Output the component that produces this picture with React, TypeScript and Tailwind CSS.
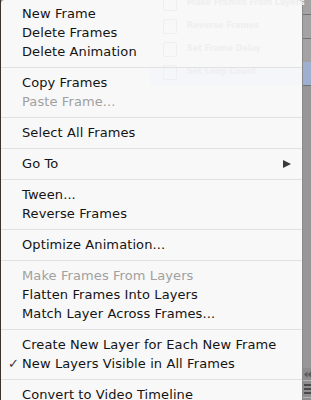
import React from 'react';

type Item =
  | { kind: 'item'; label: string; disabled?: boolean; checked?: boolean; submenu?: boolean }
  | { kind: 'sep' };

const items: Item[] = [
  { kind: 'item', label: 'New Frame' },
  { kind: 'item', label: 'Delete Frames' },
  { kind: 'item', label: 'Delete Animation' },
  { kind: 'sep' },
  { kind: 'item', label: 'Copy Frames' },
  { kind: 'item', label: 'Paste Frame...', disabled: true },
  { kind: 'sep' },
  { kind: 'item', label: 'Select All Frames' },
  { kind: 'sep' },
  { kind: 'item', label: 'Go To', submenu: true },
  { kind: 'sep' },
  { kind: 'item', label: 'Tween...' },
  { kind: 'item', label: 'Reverse Frames' },
  { kind: 'sep' },
  { kind: 'item', label: 'Optimize Animation...' },
  { kind: 'sep' },
  { kind: 'item', label: 'Make Frames From Layers', disabled: true },
  { kind: 'item', label: 'Flatten Frames Into Layers' },
  { kind: 'item', label: 'Match Layer Across Frames...' },
  { kind: 'sep' },
  { kind: 'item', label: 'Create New Layer for Each New Frame' },
  { kind: 'item', label: 'New Layers Visible in All Frames', checked: true },
  { kind: 'sep' },
  { kind: 'item', label: 'Convert to Video Timeline' },
];

// faint panel rows that show through the translucent menu
const ghostRows = ['Make Frames From Layers', 'Reverse Frames', 'Set Frame Delay', 'Set Loop Count'];

function GhostPanel() {
  return (
    <div className="absolute left-[149px] top-0 w-[152px] h-[90px] pointer-events-none">
      <div className="absolute left-0 right-0 top-[68px] h-[17px] bg-[#f4f6fa]" />
      <div className="absolute left-[13px] top-[-5px] flex flex-col gap-[7px]">
        {ghostRows.map((r) => (
          <div key={r} className="flex items-center gap-[10px] h-[16px]">
            <div className="w-[14px] h-[15px] rounded-[2px] border border-[#efefef]" />
            <span className="text-[8px] font-bold text-[#efefef] whitespace-nowrap">{r}</span>
          </div>
        ))}
      </div>
    </div>
  );
}

function SidePanel() {
  return (
    <div className="w-[9px] h-full flex flex-col bg-[#9c9c9c] border-l border-[#8a8a8a]">
      <div className="h-[14px] bg-[#a3a3a3]" />
      <div className="h-px bg-[#727272]" />
      <div className="h-[23px] bg-[#a3a3a3]" />
      <div className="h-px bg-[#727272]" />
      <div className="h-[23px] bg-[#a3a3a3]" />
      <div className="h-[23px] bg-[#9eafd0]" />
      <div className="h-px bg-[#727272]" />
      <div className="h-[282px] bg-[#979797]" />
      <div className="h-[12px] bg-[#8c8c8c] flex items-center pl-[1px]">
        <svg width="8" height="7" viewBox="0 0 8 7">
          <polygon points="4,0 0,3.5 4,7" fill="#5a5a5a" />
          <polygon points="8,0 4,3.5 8,7" fill="#5a5a5a" />
        </svg>
      </div>
      <div className="h-px bg-[#b5b5b5]" />
      <div className="h-[16px] bg-[#8e8e8e] flex flex-col justify-center gap-[2px] pl-[1px]">
        <div className="h-[2px] bg-[#4a4a4a]" />
        <div className="h-[2px] bg-[#4a4a4a]" />
        <div className="h-[2px] bg-[#4a4a4a]" />
      </div>
      <div className="h-px bg-[#b5b5b5]" />
      <div className="flex-1 bg-[#8c8c8c]" />
    </div>
  );
}

export default function App() {
  return (
    <div className="w-[311px] h-[400px] overflow-hidden flex bg-[#9c9c9c] font-['DejaVu_Sans',sans-serif]">
      <div className="w-px h-full bg-[#3e3128]" />
      <div className="relative w-[301px] h-full bg-[#f8f8f8] rounded-t-[4px] pt-[4px]">
        <GhostPanel />
        <div className="relative">
          {items.map((it, i) =>
            it.kind === 'sep' ? (
              <div key={i} className="h-[12px] flex items-center">
                <div className="h-px w-full bg-[#e1e1e1]" />
              </div>
            ) : (
              <div
                key={i}
                className={`h-[19px] flex items-center text-[13px] leading-[19px] tracking-[0.1px] whitespace-nowrap ${
                  it.disabled ? 'text-[#a0a0a0]' : 'text-[#141414]'
                }`}
              >
                <span className="w-[21px] pl-[7px] text-[13px] text-[#3a3a3a]">{it.checked ? '✓' : ''}</span>
                <span className="flex-1">{it.label}</span>
                {it.submenu && (
                  <svg width="8" height="8" viewBox="0 0 8 8" className="mr-[11px]">
                    <polygon points="0,0 8,4 0,8" fill="#3a3a3a" />
                  </svg>
                )}
              </div>
            )
          )}
        </div>
      </div>
      <SidePanel />
    </div>
  );
}
